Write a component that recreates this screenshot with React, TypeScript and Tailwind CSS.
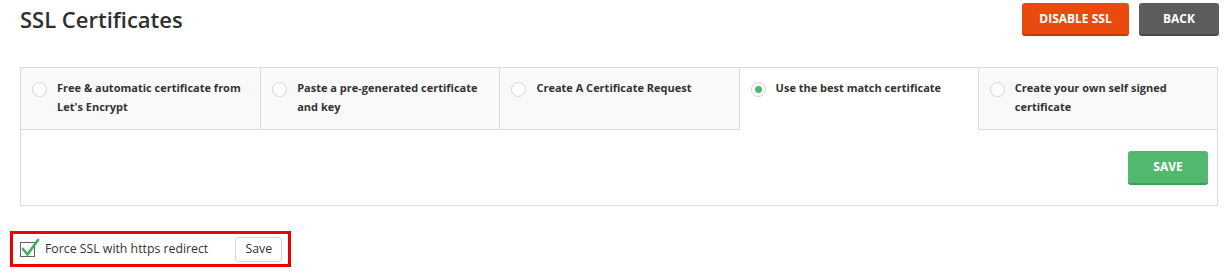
import { useState } from 'react';

const options = [
  { id: 'le', label: "Free & automatic certificate from Let's Encrypt" },
  { id: 'paste', label: 'Paste a pre-generated certificate and key' },
  { id: 'csr', label: 'Create A Certificate Request' },
  { id: 'best', label: 'Use the best match certificate' },
  { id: 'self', label: 'Create your own self signed certificate' },
];

function Radio({ checked }: { checked: boolean }) {
  return (
    <span className="mt-[4px] flex h-[15px] w-[15px] shrink-0 items-center justify-center rounded-full border border-[#d4d4d4] bg-white">
      {checked && <span className="h-[7px] w-[7px] rounded-full bg-[#4cb86a]" />}
    </span>
  );
}

export default function App() {
  const [active, setActive] = useState('best');
  const [force, setForce] = useState(true);

  return (
    <div className="h-[276px] w-[1228px] bg-white pl-5 pr-[10px] text-[#333] font-['Open_Sans',sans-serif]">
      <div className="flex items-start justify-between pt-[3px]">
        <h1 className="pt-[4px] text-[22px] font-semibold leading-6 text-[#2f2f2f]">SSL Certificates</h1>
        <div className="-mr-px flex gap-[10px]">
          <button className="h-[33px] w-[107px] rounded-[3px] border-b-2 border-[#c23a08] bg-[#e94b0f] text-[12px] font-bold text-white">
            DISABLE SSL
          </button>
          <button className="h-[33px] w-[80px] rounded-[3px] border-b-2 border-[#474847] bg-[#5b5c5b] text-[12px] font-bold text-white">
            BACK
          </button>
        </div>
      </div>

      <div className="mt-[31px] border border-[#dcdcdc]">
        <div className="grid grid-cols-5">
          {options.map((o, i) => {
            const on = o.id === active;
            return (
              <button
                key={o.id}
                onClick={() => setActive(o.id)}
                className={`flex h-[62px] items-start gap-[10px] pl-[11px] pr-4 pt-[10px] text-left text-[11px] font-bold leading-[19px] ${
                  i > 0 ? 'border-l border-[#dcdcdc]' : ''
                } ${on ? 'bg-white' : 'border-b border-b-[#dcdcdc] bg-[#f9f9f9]'}`}
              >
                <Radio checked={on} />
                <span>{o.label}</span>
              </button>
            );
          })}
        </div>
        <div className="flex justify-end pb-5 pr-[9px] pt-[21px]">
          <button className="h-[34px] w-[80px] rounded-[3px] border-b-2 border-[#3f9f59] bg-[#52b86e] text-[12px] font-bold text-white">
            SAVE
          </button>
        </div>
      </div>

      <div className="-ml-[10px] mt-[25px] inline-flex h-[36px] items-center border-[3px] border-[#ee0000] pl-[7px] pr-[6px]">
        <button onClick={() => setForce(!force)} className="relative h-[15px] w-[15px] border border-[#5b6470] bg-white">
          {force && (
            <svg viewBox="0 0 20 20" className="absolute -left-px -top-[6px] h-[20px] w-[20px] overflow-visible">
              <path d="M3 12 L7.5 17.5 L18 3" fill="none" stroke="#3fae5a" strokeWidth="2.6" strokeLinecap="round" strokeLinejoin="round" />
            </svg>
          )}
        </button>
        <span className="ml-[10px] text-[12.3px]">Force SSL with https redirect</span>
        <button className="ml-[27px] h-[25px] w-[47px] rounded-[3px] border border-[#d6d6d6] bg-white text-[12.3px] text-[#333]">
          Save
        </button>
      </div>
    </div>
  );
}
